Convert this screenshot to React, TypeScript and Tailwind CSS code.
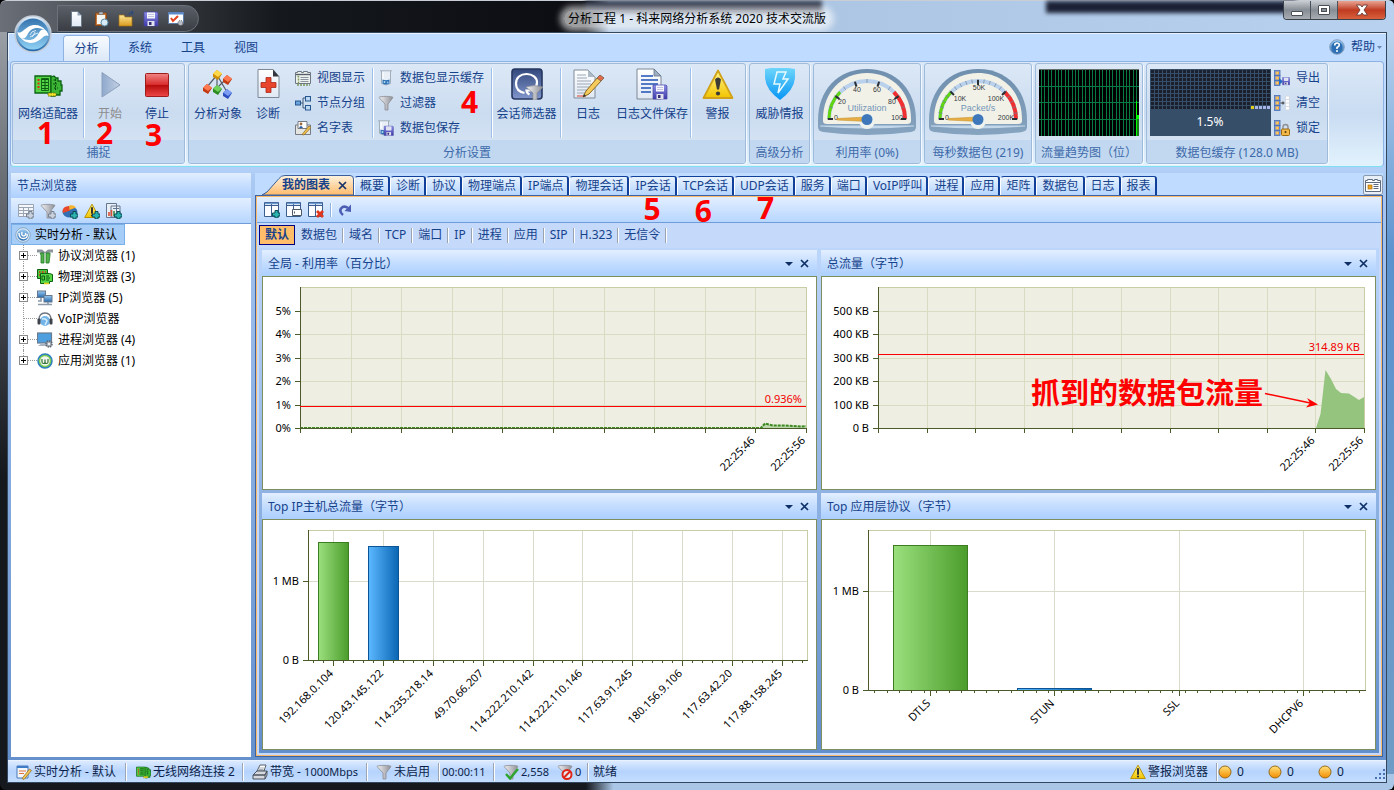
import type { ReactNode } from "react";

/* ---------- shared gradients ---------- */

function Stops({ id, from, to, vertical = true }: { id: string; from: string; to: string; vertical?: boolean }) {
  return (
    <linearGradient id={id} x1="0" y1="0" x2={vertical ? "0" : "1"} y2={vertical ? "1" : "0"}>
      <stop offset="0" stopColor={from} />
      <stop offset="1" stopColor={to} />
    </linearGradient>
  );
}

function SharedDefs() {
  return (
    <svg className="absolute h-0 w-0" aria-hidden="true">
      <defs>
        <Stops id="greenBar" from="#9be07e" to="#4b9c2b" vertical={false} />
        <Stops id="blueBar" from="#5cb8ff" to="#0a66b4" vertical={false} />
        <Stops id="orb" from="#e8f2fb" to="#1f66a8" />
        <Stops id="orbIn" from="#3574ae" to="#8fd0f5" />
        <Stops id="grey" from="#f2f2f4" to="#8d8f96" vertical={false} />
        <Stops id="play" from="#8fa9cd" to="#c3d0e2" vertical={false} />
        <Stops id="warn" from="#fff68a" to="#f2c400" />
        <Stops id="shield" from="#6fd6fb" to="#0795f5" />
        <Stops id="navy" from="#33487c" to="#8096cc" />
        <Stops id="folder" from="#fde79a" to="#d99a1c" />
        <Stops id="floppy" from="#8b8fe6" to="#3e3aa8" />
        <Stops id="page" from="#ffffff" to="#dfe8f4" />
        <Stops id="ball" from="#ffe27a" to="#f28c00" />
        <Stops id="bluish" from="#9ccbf2" to="#2468ac" />
        <Stops id="rim" from="#6f8fae" to="#86a3bf" />
        <linearGradient id="stop" x1="0" y1="0" x2="0" y2="1">
          <stop offset="0" stopColor="#f08585" />
          <stop offset="0.5" stopColor="#d92a2a" />
          <stop offset="0.52" stopColor="#b80d0d" />
          <stop offset="1" stopColor="#ee4747" />
        </linearGradient>
      </defs>
    </svg>
  );
}

/* ---------- icon helpers ---------- */

function Icon({ size = 16, children, className = "" }: { size?: number; children: ReactNode; className?: string }) {
  return (
    <svg width={size} height={size} viewBox={`0 0 ${size} ${size}`} className={`shrink-0 ${className}`} aria-hidden="true">
      {children}
    </svg>
  );
}

const FunnelShape = () => (
  <path d="M1 2.5C1 1 15 1 15 2.5L10 9v6H7V9z" fill="url(#grey)" stroke="#8a8c92" strokeWidth="0.8" />
);
const FloppyShape = () => (
  <g>
    <path d="M1 1h13l1 1v13H1z" fill="url(#floppy)" stroke="#4945a5" strokeWidth="0.7" />
    <rect x="4" y="1.5" width="8" height="6" fill="#f5f6fc" />
    <path d="M5 3.5h6M5 5.5h6" stroke="#b6b9d8" strokeWidth="0.8" />
    <rect x="4.5" y="10" width="7" height="5" fill="#e2e2ee" />
    <rect x="6" y="11" width="2.5" height="3" fill="#333074" />
  </g>
);
const PlusShape = () => (
  <path d="M11 8.5h3V11h2v3h-2v2h-3v-2H8.500v-3H11z" fill="#2bb3b0" stroke="#0b4f58" strokeWidth="1" />
);
const GreyPlusShape = () => (
  <path d="M11 8.500h3V11h2v3h-2v2h-3v-2H8.500v-3H11z" fill="#c8d1dd" stroke="#77818f" strokeWidth="1" />
);
const BeakerShape = () => (
  <g>
    <path d="M2 .8h12M3.500 1v12.500q4.500 3 9 0V1" fill="#e8eff7" stroke="#a3aebd" />
    <path d="M5 2v10" stroke="#fff" />
    <path d="M4.500 9.500q3.500 1.500 7 0v4q-3.500 2-7 0z" fill="#2b6fb3" />
    <circle cx="6.500" cy="12" r="1" fill="#b8dcf8" />
    <circle cx="9.700" cy="12.500" r="1" fill="#8fc4ee" />
  </g>
);
const WarnShape = () => (
  <g>
    <path d="M8 1.200L15.300 14.500H.7z" fill="url(#warn)" stroke="#b89200" strokeLinejoin="round" />
    <path d="M8 5v5" stroke="#333" strokeWidth="2" strokeLinecap="round" />
    <circle cx="8" cy="12.500" r="1.100" fill="#333" />
  </g>
);
const NicShape = () => (
  <g>
    <path d="M1 2h16v17H1z" fill="#55d646" stroke="#0b6212" strokeWidth="1.300" />
    <path d="M17 3l3-1 2 2h2v3h3v4h1v6h-2v4h-4l-1 1h-4z" fill="#3cb435" stroke="#0b6212" strokeWidth="1.300" />
    <path d="M8 5.500h6M8 8.500h6M8 11.500h6M8 14.500h6M11 5v11" fill="none" stroke="#0c5c12" strokeWidth="1.100" />
    <path d="M7.500 4.500h7v12h-7z" fill="none" stroke="#0c5c12" strokeWidth="0.900" />
    <path d="M4.500 5v11" stroke="#e22c18" strokeWidth="2" strokeDasharray="2 1.500" />
    <path d="M19.500 6h3M19 10h4M20 14h4M21.500 5v12" fill="none" stroke="#0a4f10" strokeWidth="1.100" strokeDasharray="2 1" />
    <path d="M14 19h8v3h-8z" fill="#f2e22b" stroke="#6e7a10" strokeDasharray="1.500 1" />
  </g>
);
const PageShape = () => (
  <path d="M3 1h17l7 7v23H3z" fill="url(#page)" stroke="#7c8896" strokeLinejoin="round" />
);
const PageFold = () => <path d="M20 1v7h7z" fill="#9fb0c4" stroke="#647588" strokeWidth="0.800" />;

/* large ribbon icons */

const NicIcon = () => (
  <Icon size={32}>
    <g transform="translate(2 6)">
      <NicShape />
    </g>
  </Icon>
);
const PlayIcon = () => (
  <Icon size={32}>
    <path d="M8 4.500L26 17 8 29z" fill="url(#play)" stroke="#8da0bd" />
  </Icon>
);
const StopIcon = () => (
  <Icon size={32}>
    <rect x="4.500" y="5.500" width="23" height="23" rx="1" fill="url(#stop)" stroke="#9d1c1c" />
  </Icon>
);
function Cube({ x, y, light, dark }: { x: number; y: number; light: string; dark: string }) {
  return (
    <g transform={`translate(${x} ${y})`}>
      <path d="M0 4L4 0l5 4-4 6-5-3z" fill={dark} />
      <path d="M0 3.500L4 0l5 3.500L5 7z" fill={light} />
    </g>
  );
}
const ObjectsIcon = () => (
  <Icon size={32}>
    <path d="M15 7L5 19M15 7l10 17M25 10L15 20M15 7v12" fill="none" stroke="#555c66" strokeWidth="1.200" />
    <Cube x={11} y={2} light="#ffd84a" dark="#cc8e00" />
    <Cube x={21} y={7} light="#ff7a50" dark="#c23b14" />
    <Cube x={1} y={16} light="#ff7a50" dark="#c23b14" />
    <Cube x={11} y={17} light="#6fd05a" dark="#2b8a22" />
    <Cube x={21} y={21} light="#7c9cf2" dark="#2c4dc0" />
  </Icon>
);
const DiagnoseIcon = () => (
  <Icon size={32}>
    <path d="M6 1.500h15l6 7v21H6z" fill="url(#page)" stroke="#7c8896" />
    <path d="M21 1.500v7h6z" fill="#33363c" />
    <path d="M14 9.500h5v5h5v5h-5v5h-5v-5H9v-5h5z" fill="#e8452c" stroke="#a92a18" strokeWidth="0.800" />
  </Icon>
);
const ConversationFilterIcon = () => (
  <Icon size={32}>
    <rect x="1" y="1" width="30" height="30" rx="3" fill="url(#navy)" stroke="#263760" strokeWidth="1.600" />
    <path d="M13.500 25C8 24 5 20.500 5 15.500 5 9.500 9.500 6 15.500 6S26 9.500 26 14.500c0 5-5 8.500-10.500 8 0 2 1 3 3 4" fill="none" stroke="#fff" strokeWidth="2.200" />
    <path d="M15 19q8-3 17 0l-6 6v7h-4v-7z" fill="url(#grey)" stroke="#8a8c92" strokeWidth="0.700" />
  </Icon>
);
const LogIcon = () => (
  <Icon size={32}>
    <path d="M2 2h14l7 7v21H2z" fill="url(#page)" stroke="#808b98" />
    <path d="M16 2v7h7z" fill="#aeb9c6" />
    <path d="M5 7h9M5 10h10M5 13h14M5 16h14M5 19h12M5 22h10M5 25h8" stroke="#9ba6b3" />
    <path d="M5 28h9" stroke="#e0402c" />
    <path d="M11 29l3-6L26 9l4 3-13 14z" fill="#f5cc5c" stroke="#8a6520" />
    <path d="M25 10l3-3 4 3-3 3z" fill="#e46a4a" stroke="#8a6a52" />
    <path d="M11 29l1-3 2 2z" fill="#333" />
  </Icon>
);
const LogSaveIcon = () => (
  <Icon size={32}>
    <g transform="translate(-2 0)">
      <PageShape />
      <PageFold />
    </g>
    <path d="M5 8h12M5 12h17M5 16h17M5 20h10M5 24h10" stroke="#1f52b4" strokeWidth="1.500" />
    <g transform="translate(16 16)">
      <FloppyShape />
    </g>
  </Icon>
);
const AlarmIcon = () => (
  <Icon size={32}>
    <path d="M16 2.500L30.500 30H1.500z" fill="url(#warn)" stroke="#d0a21a" strokeWidth="1.800" strokeLinejoin="round" />
    <path d="M13 11.500q3-4 6 0L17 21.500h-2z" fill="#3d3b35" />
    <circle cx="16" cy="25.500" r="2.100" fill="#3d3b35" />
  </Icon>
);
const ShieldIcon = () => (
  <Icon size={32}>
    <path d="M1 1q15-3 30 0v9q-1 12-15 22Q2 22 1 10z" fill="url(#shield)" />
    <path d="M13 4h9l-3 7h5L14 25l2-9h-6z" fill="none" stroke="#e8faff" strokeWidth="1.500" />
  </Icon>
);

/* small ribbon icons */

const ViewIcon = () => (
  <Icon>
    <path d="M.5 2.500h2v-1h4v1h2v-1h4v1h3v11H.500z" fill="#eef2ee" stroke="#6d7682" />
    <path d="M1 4.500h14" stroke="#56606d" strokeWidth="1.400" />
    <path d="M5.500 7.500h8M5.500 9.500h8M5.500 11.500h8" stroke="#8b95a2" />
    <path d="M2.500 6.500h1v7M2 15h13" fill="none" stroke="#7e9a58" strokeWidth="1.400" strokeDasharray="2 1" />
  </Icon>
);
const GroupIcon = () => (
  <Icon>
    <path d="M5 8h3V3h3M8 8v5h3" fill="none" stroke="#3c587c" />
    <rect x="0.500" y="6" width="5" height="4" fill="#68a3dd" stroke="#27578f" />
    <rect x="10.500" y="1.500" width="5" height="4.500" fill="#bcd7f1" stroke="#27578f" />
    <rect x="10.500" y="10.500" width="5" height="4.500" fill="#bcd7f1" stroke="#27578f" />
  </Icon>
);
const NameIcon = () => (
  <Icon>
    <path d="M.5 5h15v9.500H.5z" fill="#e4e4e0" stroke="#777a80" />
    <path d="M3 1.500h9v7H3z" fill="#fff" stroke="#777a80" />
    <circle cx="6" cy="4" r="1.400" fill="#9b6b3c" />
    <path d="M4 8q2-4 4 0" fill="#2e5da8" />
    <path d="M7 14.500L14 6l2 1.500-7 7.500z" fill="#f0c250" stroke="#8a6520" strokeWidth="0.700" />
  </Icon>
);
const BeakerIcon = () => (
  <Icon>
    <BeakerShape />
  </Icon>
);
const FunnelIcon = () => (
  <Icon>
    <FunnelShape />
  </Icon>
);
const BeakerSaveIcon = () => (
  <Icon>
    <g transform="translate(-2 0)">
      <BeakerShape />
    </g>
    <g transform="translate(5.500 5.500) scale(0.660)">
      <FloppyShape />
    </g>
  </Icon>
);
function CabinetIcon({ kind }: { kind: "save" | "clear" | "lock" }) {
  return (
    <Icon>
      {[0.5, 5.500, 10.500].map((y) => (
        <g key={y}>
          <rect x="0.500" y={y} width="5.500" height="5" fill="#6f9aec" stroke="#4a6fb4" strokeWidth="0.800" />
          <rect x="1.500" y={y + 1} width="3.500" height="3" fill="#f3ab34" />
          <rect x="2.500" y={y + 2} width="1.500" height="1" fill="#fff0c0" />
        </g>
      ))}
      {kind === "save" && (
        <g>
          <path d="M5 8l4 3.500L5 15z" fill="#2469c4" />
          <g transform="translate(8 7) scale(0.520)">
            <FloppyShape />
          </g>
        </g>
      )}
      {kind === "clear" && (
        <g>
          <path d="M6.500 8h4M9 6.500v3" stroke="#333" />
          <path d="M11.500 1h4v14h-4zM11.500 4.500h4M11.500 8h4M11.500 11.500h4" fill="#fff" stroke="#d3dae4" />
        </g>
      )}
      {kind === "lock" && (
        <g>
          <path d="M9 9V7a2.500 2.500 0 015 0V9" fill="none" stroke="#8f8f92" strokeWidth="1.400" />
          <rect x="7.500" y="9" width="8" height="6.500" rx="1" fill="#f2b84a" stroke="#9a6a10" />
          <circle cx="11.500" cy="12" r="1" fill="#4f3a0c" />
        </g>
      )}
    </Icon>
  );
}

/* node browser icons */

const SwirlIcon = () => (
  <Icon>
    <circle cx="8" cy="8" r="7.300" fill="#dbe9f6" stroke="#88a8c8" />
    <circle cx="8" cy="8" r="5.800" fill="url(#bluish)" />
    <path d="M4 6q0 6 5 5.500Q13 11 12 7M7 5q-1 4 2 4 2-.5 1.500-3" fill="none" stroke="#fff" strokeWidth="1.400" />
  </Icon>
);
const ProtocolIcon = () => (
  <Icon>
    <path d="M0 1.500h5l3 2.500 3-2.500h5v3h-4V5H4v-.5H0z" fill="#8d959c" />
    <path d="M3 5h4v10H4V7zM9 5h4v2l-1 8H9z" fill="#53b24b" stroke="#1f7a24" strokeWidth="0.800" />
  </Icon>
);
const PhysicalIcon = () => (
  <Icon>
    <path d="M.5.500h10v9H.5z" fill="#4cc83f" stroke="#0b6212" />
    <path d="M2 3h7M2 6h7" stroke="#e22c18" strokeWidth="1.400" strokeDasharray="1.500 1.500" />
    <path d="M3.500 4.500h9l3 1v7h-3v2h-9z" fill="#55d646" stroke="#0b6212" />
    <path d="M5 7h2.500v4H5zM9 7h3M9 9h4M9 11h3" fill="none" stroke="#0c5c12" />
    <path d="M7 14.500h5" stroke="#e6c81e" strokeWidth="1.600" />
  </Icon>
);
const IpIcon = () => (
  <Icon>
    <rect x="0.500" y="1" width="8" height="6.500" fill="url(#bluish)" stroke="#65788f" />
    <rect x="7" y="5.500" width="8" height="6.500" fill="url(#bluish)" stroke="#65788f" />
    <path d="M4 8v3h-3M11 12v3M1 14.500h14" stroke="#8b99a8" strokeWidth="1.600" fill="none" />
  </Icon>
);
const VoipIcon = () => (
  <Icon>
    <circle cx="8" cy="10" r="5" fill="#74b4e8" />
    <path d="M5 8q4-1 5 2l-2 4" stroke="#d3edfb" fill="none" strokeWidth="1.500" />
    <path d="M2 9q0-7 6-7t6 7" fill="none" stroke="#6d7580" strokeWidth="1.300" />
    <rect x="0.500" y="7.500" width="3" height="6" rx="1" fill="#3f444c" />
    <rect x="12.500" y="7.500" width="3" height="6" rx="1" fill="#3f444c" />
  </Icon>
);
const ProcessIcon = () => (
  <Icon>
    <rect x="0.500" y="1" width="14" height="10" fill="#4d9fdf" stroke="#6b7c90" strokeWidth="1.200" />
    <path d="M1 14h9l-1-3H5z" fill="#a8b4c2" />
    <circle cx="12" cy="12" r="3" fill="#a2aab4" stroke="#5b6470" strokeWidth="1.500" strokeDasharray="1.500 0.800" />
    <circle cx="12" cy="12" r="1.100" fill="#fff" />
  </Icon>
);
const AppIcon = () => (
  <Icon>
    <circle cx="8" cy="8" r="7" fill="#7ccc50" stroke="#2c7fc0" strokeWidth="1.500" />
    <circle cx="8" cy="8" r="4.800" fill="#f2f8f0" />
    <path d="M5 6v3q0 1.500 1.500 1.500T8 9V6.500V9q0 1.500 1.500 1.500T11 9V6" fill="none" stroke="#37713a" strokeWidth="1.200" />
  </Icon>
);

/* toolbar icons */

const TableAddIcon = () => (
  <Icon>
    <path d="M.5 1.500h15v12H.5zM.5 4.500h15M.5 7.500h15M.5 10.500h15M5.500 4.500v9M10.500 4.500v9" fill="#f4f6fa" stroke="#9aa5b4" />
    <GreyPlusShape />
  </Icon>
);
const FunnelAddIcon = () => (
  <Icon>
    <FunnelShape />
    <GreyPlusShape />
  </Icon>
);
const ChartAddIcon = () => (
  <Icon>
    <ellipse cx="8" cy="9" rx="7.500" ry="5.500" fill="#2f6fb2" />
    <path d="M8 7.500L1 10Q-1 4 7 3z" fill="#e8472a" />
    <path d="M7.500 7L7 2.500q5-1 7 2z" fill="#f7b32e" />
    <PlusShape />
  </Icon>
);
const AlarmAddIcon = () => (
  <Icon>
    <WarnShape />
    <PlusShape />
  </Icon>
);
const ReportAddIcon = () => (
  <Icon>
    <path d="M.5.500h10v14H.5zM5 3h9v11H5z" fill="#e9eff6" stroke="#64778f" />
    <path d="M3 13V9M5.500 13V7" stroke="#d94d33" strokeWidth="1.600" />
    <path d="M8 13V8" stroke="#3b8b44" strokeWidth="1.600" />
    <path d="M7 5.500h6" stroke="#64778f" />
    <PlusShape />
  </Icon>
);
function PanelIcon({ kind }: { kind: "add" | "edit" | "remove" }) {
  return (
    <Icon>
      <path d="M.5.500h14v14H.5zM.5 3.500h14M7.500.500v14" fill="#fafcff" stroke="#395d8c" />
      <path d="M1 1.500h13" stroke="#6c9bd2" strokeWidth="1.500" />
      {kind === "add" && <PlusShape />}
      {kind === "edit" && <path d="M6.500 7.500h9v6h-9zM8.500 9.500v2" fill="#fff" stroke="#4f5866" />}
      {kind === "remove" && <path d="M9 9l6 6M15 9l-6 6" stroke="#e2361c" strokeWidth="2.800" />}
    </Icon>
  );
}
const RedoIcon = () => (
  <Icon>
    <path d="M5 13Q1 10 3 6.500 6 3 10 6" fill="none" stroke="#4c5db4" strokeWidth="2.600" />
    <path d="M13 2.500V10L6.500 9z" fill="#4c5db4" />
  </Icon>
);

/* ---------- gauges ---------- */

function polar(r: number, t: number): [number, number] {
  const a = Math.PI * (1 - t);
  return [49 + r * Math.cos(a), 50 - r * Math.sin(a)];
}
function arc(r: number, from: number, to: number) {
  const [x1, y1] = polar(r, from);
  const [x2, y2] = polar(r, to);
  return `M${x1} ${y1}A${r} ${r} 0 0 1 ${x2} ${y2}`;
}

interface GaugeProps {
  title: string;
  labels: { text: string; x: number; y: number }[];
  major: number;
  minor: number;
}

function Gauge({ title, labels, major, minor }: GaugeProps) {
  const ticks = Array.from({ length: minor + 1 }, (_, i) => i / minor);
  const bigTicks = Array.from({ length: major + 1 }, (_, i) => i / major);
  return (
    <svg width="98" height="66" viewBox="0 0 98 66" role="img" aria-label={title} className="font-['Liberation_Sans',sans-serif]">
      <path d="M0 51C0 21 20 0 49 0s49 21 49 51v7q0 4-5 5-44 6-88 0-5-1-5-5z" fill="url(#rim)" />
      <path d="M5 50C5 24 23 4 49 4s44 20 44 46v2q0 3-4 3H9q-4 0-4-3z" fill="#f1f1e7" />
      <path d="M2 56.500h94v1q-47 4-94 0z" fill="#c3d7ea" />
      <circle cx="49" cy="52" r="8" fill="#eef2ee" />
      <path d={arc(38, 0, 1)} fill="none" stroke="#b9d1ec" strokeWidth="4" />
      <path d={arc(38, 0, 0.25)} fill="none" stroke="#5fd40f" strokeWidth="3" />
      <path d={arc(38, 0.75, 1)} fill="none" stroke="#f03030" strokeWidth="4" />
      {ticks.map((t) => {
        const [x1, y1] = polar(36, t);
        const [x2, y2] = polar(40, t);
        return <path key={t} d={`M${x1} ${y1}L${x2} ${y2}`} stroke="#6f8296" strokeWidth="0.700" />;
      })}
      {bigTicks.map((t) => {
        const [x1, y1] = polar(34, t);
        const [x2, y2] = polar(39, t);
        return <path key={t} d={`M${x1} ${y1}L${x2} ${y2}`} stroke="#2a2f36" strokeWidth="2" />;
      })}
      {labels.map((l) => (
        <text key={l.text} x={l.x} y={l.y} fontSize="7" textAnchor="middle" fill="#33373c">
          {l.text}
        </text>
      ))}
      <text x="49" y="42" fontSize="9" textAnchor="middle" fill="#7396b8">
        {title}
      </text>
      <path d="M19 49.500L49 48v4.500L19 51z" fill="#e6ae45" stroke="#c58b22" strokeWidth="0.500" />
      <circle cx="49" cy="50.500" r="5.500" fill="#3f78ba" />
    </svg>
  );
}

function TrafficTrend() {
  const cols = Array.from({ length: 29 }, (_, i) => Math.round(2 + i * 3.400));
  return (
    <svg width="100" height="67" viewBox="0 0 100 67" role="img" aria-label="流量趋势图" shapeRendering="crispEdges">
      <rect width="100" height="67" fill="#000" />
      {cols.map((x) => (
        <rect key={x} x={x} width="1" height="67" fill="#0a7a45" />
      ))}
      {[17, 33, 50].map((y) => (
        <rect key={y} y={y} width="100" height="1" fill="#0a7a45" />
      ))}
      <rect width="100" height="1" fill="#63706a" />
      <path d="M98 67V46h2v21z" fill="#187a18" />
      <rect x="97" y="32" width="1" height="35" fill="#00ff00" />
      <rect x="98" y="46" width="2" height="4" fill="#00ff00" />
    </svg>
  );
}

function BufferMeter() {
  const cols = Array.from({ length: 30 }, (_, i) => i);
  const rows = Array.from({ length: 10 }, (_, i) => i);
  return (
    <svg width="121" height="67" viewBox="0 0 121 67" role="img" aria-label="数据包缓存">
      <rect width="121" height="67" fill="#374e69" />
      {rows.map((r) =>
        cols.map((c) => {
          const last = r === 9;
          const fill = last && c > 25 ? "#a9b4e8" : last && c === 25 ? "#e2cf1c" : "#1a202e";
          return <rect key={`${r}-${c}`} x={1 + c * 4} y={1 + r * 4} width="3" height="3" fill={fill} shapeRendering="crispEdges" />;
        }),
      )}
      <text x="60" y="57" fontSize="12" textAnchor="middle" fill="#fff">
        1.5%
      </text>
    </svg>
  );
}

/* ---------- annotations ---------- */

function Mark({ children, className }: { children: ReactNode; className: string }) {
  return (
    <span className={`pointer-events-none absolute z-20 text-[30px] leading-[22px] font-bold text-[#ff0000] ${className}`}>{children}</span>
  );
}

/* ---------- ribbon ---------- */

function BigButton({ icon, label, width = "px-1.5", muted = false, children }: { icon: ReactNode; label: string; width?: string; muted?: boolean; children?: ReactNode }) {
  return (
    <button type="button" className={`relative flex h-[74px] shrink-0 flex-col items-center gap-1.5 pt-[3px] ${width} ${muted ? "text-[#8d8d8d]" : ""}`}>
      {icon}
      <span className="whitespace-nowrap">{label}</span>
      {children}
    </button>
  );
}

function SmallButton({ icon, label, children }: { icon: ReactNode; label: string; children?: ReactNode }) {
  return (
    <button type="button" className="relative flex h-[25px] items-center gap-1.5 whitespace-nowrap">
      {icon}
      {label}
      {children}
    </button>
  );
}

const Divider = () => <span className="mt-[3px] h-[70px] w-0.5 shrink-0 border-r border-white bg-[#9dc0ea]" />;

function RibbonGroup({ title, width, children }: { title: string; width: string; children: ReactNode }) {
  return (
    <section
      className={`flex h-[101px] shrink-0 flex-col rounded-[3px] border border-[#9ebbdb] bg-linear-to-b from-[#dce8f6] via-[#cbdcf0] to-[#d9e8f6] shadow-[1px_1px_0_#f3f9ff] ${width}`}
    >
      <div className="flex h-[76px] items-start pt-px">{children}</div>
      <h2 className="flex flex-1 items-center justify-center rounded-b-[3px] bg-[#c1d8f0] pt-0.5 text-[#3e6aaa]">{title}</h2>
    </section>
  );
}

function Ribbon() {
  return (
    <div className="mx-0.5 flex h-[106px] gap-[3px] rounded-[4px] border border-[#8db2e3] border-b-[#7ee0f0] bg-linear-to-b from-[#dbe8f7] via-[#c9dcf2] to-[#e2f2fd] px-px pt-px">
      <RibbonGroup title="捕捉" width="w-[173px]">
        <BigButton icon={<NicIcon />} label="网络适配器" width="w-[70px]">
          <Mark className="top-[57px] left-[24px]">1</Mark>
        </BigButton>
        <Divider />
        <BigButton icon={<PlayIcon />} label="开始" width="w-[50px]" muted>
          <Mark className="top-[57px] left-[11px]">2</Mark>
        </BigButton>
        <BigButton icon={<StopIcon />} label="停止" width="w-[44px]">
          <Mark className="top-[59px] left-[10px]">3</Mark>
        </BigButton>
      </RibbonGroup>

      <RibbonGroup title="分析设置" width="w-[558px]">
        <BigButton icon={<ObjectsIcon />} label="分析对象" width="w-[58px]" />
        <BigButton icon={<DiagnoseIcon />} label="诊断" width="w-[42px]" />
        <div className="ml-1.5 flex w-[77px] flex-col">
          <SmallButton icon={<ViewIcon />} label="视图显示" />
          <SmallButton icon={<GroupIcon />} label="节点分组" />
          <SmallButton icon={<NameIcon />} label="名字表" />
        </div>
        <Divider />
        <div className="ml-1 flex w-[113px] flex-col">
          <SmallButton icon={<BeakerIcon />} label="数据包显示缓存" />
          <SmallButton icon={<FunnelIcon />} label="过滤器">
            <Mark className="top-px left-[83px]">4</Mark>
          </SmallButton>
          <SmallButton icon={<BeakerSaveIcon />} label="数据包保存" />
        </div>
        <Divider />
        <BigButton icon={<ConversationFilterIcon />} label="会话筛选器" width="w-[67px]" />
        <Divider />
        <BigButton icon={<LogIcon />} label="日志" width="w-[52px]" />
        <BigButton icon={<LogSaveIcon />} label="日志文件保存" width="w-[76px]" />
        <Divider />
        <BigButton icon={<AlarmIcon />} label="警报" width="w-[51px]" />
      </RibbonGroup>

      <RibbonGroup title="高级分析" width="w-[61px]">
        <BigButton icon={<ShieldIcon />} label="威胁情报" width="w-full" />
      </RibbonGroup>

      <RibbonGroup title="利用率 (0%)" width="w-[108px]">
        <div className="flex flex-1 justify-center pt-1">
          <Gauge
            title="Utilization"
            major={5}
            minor={10}
            labels={[
              { text: "0", x: 18, y: 51 },
              { text: "20", x: 24, y: 35 },
              { text: "40", x: 39, y: 23 },
              { text: "60", x: 59, y: 23 },
              { text: "80", x: 74, y: 35 },
              { text: "100", x: 79, y: 51 },
            ]}
          />
        </div>
      </RibbonGroup>

      <RibbonGroup title="每秒数据包 (219)" width="w-[108px]">
        <div className="flex flex-1 justify-center pt-1">
          <Gauge
            title="Packet/s"
            major={4}
            minor={20}
            labels={[
              { text: "0", x: 18, y: 51 },
              { text: "10K", x: 31, y: 32 },
              { text: "50K", x: 50, y: 21 },
              { text: "100K", x: 67, y: 32 },
              { text: "200K", x: 77, y: 51 },
            ]}
          />
        </div>
      </RibbonGroup>

      <RibbonGroup title="流量趋势图（位）" width="w-[108px]">
        <div className="flex flex-1 justify-center pt-1">
          <TrafficTrend />
        </div>
      </RibbonGroup>

      <RibbonGroup title="数据包缓存 (128.0 MB)" width="w-[182px]">
        <div className="pt-1 pl-[3px]">
          <BufferMeter />
        </div>
        <div className="ml-[3px] flex flex-col">
          <SmallButton icon={<CabinetIcon kind="save" />} label="导出" />
          <SmallButton icon={<CabinetIcon kind="clear" />} label="清空" />
          <SmallButton icon={<CabinetIcon kind="lock" />} label="锁定" />
        </div>
      </RibbonGroup>
    </div>
  );
}

/* ---------- title bar ---------- */

const OrbLid = () => (
  <path d="M3.500 17C7 19 9 15 14 12c6-3.500 14-2 17.500 3.500C27 12.500 21 12 17 15c-4 3-4 8.500-8 8.500C6 23.500 4 21 3.500 17z" fill="#fff" />
);

function TitleBar() {
  return (
    <header className="relative flex h-8 shrink-0 items-start overflow-visible rounded-t-md border-t border-[#c9ced6] bg-linear-to-r from-[#6b7078] from-0% via-[#15181c] via-20% to-[#0b0d12] to-[42%]">
      <div className="absolute inset-y-0 right-0 left-[42%] bg-linear-to-r from-[#0b0d12] via-[#a9c2df] via-3% to-[#b7d1ee]" />
      <div className="absolute top-0 right-[41%] left-[42%] h-3 bg-[#1c2336] blur-[2px]" />
      <div className="absolute top-0 right-[7%] left-3/4 h-3 bg-[#1c2136] blur-[2px]" />
      <div className="absolute top-1 left-[57px] flex h-[27px] w-[142px] items-center justify-between rounded-r-full border border-[#6c727b] bg-linear-to-b from-[#5b6068] to-[#3a3d43] pr-3.5 pl-2.5">
        <button type="button" aria-label="新建">
          <Icon>
            <path d="M3.500.500h6l4 4v11h-10z" fill="url(#page)" stroke="#6d7a8a" />
            <path d="M9.500.500v4h4z" fill="#8fa0b5" />
          </Icon>
        </button>
        <button type="button" aria-label="粘贴">
          <Icon>
            <path d="M2.500 2h11v12.500h-11z" fill="#c57a3e" stroke="#87491c" />
            <path d="M4 4h8v9H4z" fill="#f6f6f2" />
            <path d="M6 1h4v2.500H6z" fill="#b9bdc4" stroke="#666" strokeWidth="0.600" />
            <circle cx="11.500" cy="11.500" r="3.500" fill="#d7eaf6" stroke="#5788a8" />
          </Icon>
        </button>
        <button type="button" aria-label="打开">
          <Icon>
            <path d="M1 4h5l1 2h7v9H1z" fill="url(#folder)" stroke="#a87414" strokeWidth="0.700" />
            <path d="M11 4q0-2 4-3l-2-.5M15 1l-1 3" fill="none" stroke="#294a7c" strokeWidth="1.200" />
          </Icon>
        </button>
        <button type="button" aria-label="保存">
          <Icon>
            <FloppyShape />
          </Icon>
        </button>
        <button type="button" aria-label="选项">
          <Icon>
            <path d="M.5 1.500h15v11H.5z" fill="#fff" stroke="#5c7ba8" />
            <path d="M.5 2.500h15" stroke="#5c8cd0" strokeWidth="2" />
            <path d="M3 7l2 3 5-5" fill="none" stroke="#e2401f" strokeWidth="2" />
            <circle cx="12.500" cy="12" r="2.500" fill="#b8bdc6" stroke="#555" strokeDasharray="1 1" />
          </Icon>
        </button>
      </div>
      <button type="button" aria-label="主菜单" className="absolute top-3.5 left-3.5 z-10">
        <Icon size={38}>
          <circle cx="19" cy="19" r="18" fill="url(#orb)" stroke="#c4cdd8" strokeWidth="1.500" />
          <circle cx="19" cy="19" r="15.500" fill="url(#orbIn)" />
          <OrbLid />
          <g transform="rotate(180 19 19)">
            <OrbLid />
          </g>
          <path d="M16 20q1-4 6-4.500M18 22q1-3 6-4M21 17q-1 4-5 5" fill="none" stroke="#e6f2fb" strokeWidth="0.900" />
        </Icon>
      </button>
      <h1 className="absolute inset-x-0 top-2.5 text-center text-xs whitespace-nowrap text-black">
        <span className="rounded-full bg-white/60 px-1 shadow-[0_0_6px_4px_rgba(255,255,255,0.6)]">分析工程 1 - 科来网络分析系统 2020 技术交流版</span>
      </h1>
      <div className="absolute top-0 right-2 flex h-[19px] overflow-hidden rounded-b border border-t-0 border-[#3a4048] text-white">
        <button type="button" aria-label="最小化" className="flex w-[27px] items-center justify-center border-r border-[#4a525c] bg-linear-to-b from-[#c9cdd2] via-[#878d94] to-[#a8adb2]">
          <span className="mt-1.5 h-[5px] w-3 rounded-[1px] border border-[#4a4f56] bg-white" />
        </button>
        <button type="button" aria-label="最大化" className="flex w-[27px] items-center justify-center border-r border-[#4a525c] bg-linear-to-b from-[#c9cdd2] via-[#878d94] to-[#a8adb2]">
          <span className="flex h-[10px] w-3 items-center justify-center rounded-[1px] border border-[#4a4f56] bg-white">
            <span className="h-1 w-1.5 border border-[#4a4f56] bg-[#8a9098]" />
          </span>
        </button>
        <button type="button" aria-label="关闭" className="flex w-[47px] items-center justify-center bg-linear-to-b from-[#e8a392] via-[#bf3a20] to-[#d9603c]">
          <svg width="14" height="12" viewBox="0 0 14 12" aria-hidden="true">
            <path d="M1.500 1h4L7 3l1.500-2h4L9 6l3.500 5h-4L7 9l-1.500 2h-4L5 6z" fill="#fff" stroke="#6a3a34" strokeWidth="0.900" />
          </svg>
        </button>
      </div>
    </header>
  );
}

function MenuBar() {
  return (
    <nav className="flex h-7 items-end border-t border-l border-[#e9f3ff] pr-1 pl-[54px]">
      <div className="flex gap-[7px]">
        <button type="button" className="h-[26px] w-[47px] rounded-t-[4px] border border-b-0 border-[#8db2e3] bg-linear-to-b from-[#f7fbff] to-[#dbe8f7]">
          分析
        </button>
        {["系统", "工具", "视图"].map((m) => (
          <button key={m} type="button" className="h-[26px] w-[46px]">
            {m}
          </button>
        ))}
      </div>
      <button type="button" className="mb-1.5 ml-auto flex items-center gap-1.5">
        <Icon>
          <circle cx="8" cy="8" r="7.300" fill="url(#bluish)" stroke="#8aa3bf" />
          <circle cx="8" cy="8" r="5.500" fill="#2d6fb4" />
          <path d="M5.700 6.500Q5.700 4 8 4t2.300 2Q10.300 7.300 8 8.500V10" fill="none" stroke="#fff" strokeWidth="1.600" />
          <circle cx="8" cy="12" r="1" fill="#fff" />
        </Icon>
        <span>帮助</span>
        <svg width="5" height="3" viewBox="0 0 5 3" className="-ml-1" aria-hidden="true">
          <path d="M0 0h5L2.500 3z" fill="#6b87b0" />
        </svg>
      </button>
    </nav>
  );
}

/* ---------- node browser ---------- */

const nodes: { label: string; icon: ReactNode; open: boolean }[] = [
  { label: "协议浏览器 (1)", icon: <ProtocolIcon />, open: true },
  { label: "物理浏览器 (3)", icon: <PhysicalIcon />, open: true },
  { label: "IP浏览器 (5)", icon: <IpIcon />, open: true },
  { label: "VoIP浏览器", icon: <VoipIcon />, open: false },
  { label: "进程浏览器 (4)", icon: <ProcessIcon />, open: true },
  { label: "应用浏览器 (1)", icon: <AppIcon />, open: true },
];

function NodeBrowser() {
  return (
    <aside className="flex w-60 shrink-0 flex-col bg-white">
      <h2 className="flex h-[25px] items-center bg-linear-to-b from-[#e1eeff] via-[#c6deff] to-[#add0ff] pl-1.5">节点浏览器</h2>
      <div className="flex h-[26px] items-center gap-1.5 border-b border-[#6f9dd9] bg-linear-to-b from-[#e3efff] to-[#b7d6ff] pl-[7px]">
        <button type="button" aria-label="添加表格"><TableAddIcon /></button>
        <button type="button" aria-label="添加过滤器"><FunnelAddIcon /></button>
        <button type="button" aria-label="添加图表"><ChartAddIcon /></button>
        <button type="button" aria-label="添加警报"><AlarmAddIcon /></button>
        <button type="button" aria-label="添加报表"><ReportAddIcon /></button>
      </div>
      <div className="text-black">
        <button type="button" className="flex h-[21px] w-[114px] items-center gap-1 border border-[#7ab0e8] bg-[#a6cdf7] pl-[3px] whitespace-nowrap">
          <SwirlIcon />
          实时分析 - 默认
        </button>
        <ul>
          {nodes.map((n, i) => (
            <li key={n.label} className="flex h-[21px] items-stretch pl-2">
              <span className="relative w-[18px]">
                <span className={`absolute top-0 left-1 border-l border-dotted border-[#9a9a9a] ${i === nodes.length - 1 ? "h-2.5" : "h-full"}`} />
                <span className="absolute top-2.5 right-0 left-1 border-t border-dotted border-[#9a9a9a]" />
                {n.open && (
                  <svg width="9" height="9" viewBox="0 0 9 9" className="absolute top-1.5 left-0" aria-hidden="true" shapeRendering="crispEdges">
                    <path d="M.5.500h8v8h-8z" fill="#fff" stroke="#8a8a8a" />
                    <path d="M2 4.500h5M4.500 2v5" stroke="#000" />
                  </svg>
                )}
              </span>
              <button type="button" className="flex items-center gap-[5px] whitespace-nowrap">
                {n.icon}
                {n.label}
              </button>
            </li>
          ))}
        </ul>
      </div>
    </aside>
  );
}

/* ---------- charts ---------- */

interface TimeChartProps {
  left: number;
  right: number;
  labels: string[];
  limit: { y: number; text: string };
  children: ReactNode;
}

const PLOT_TOP = 10;
const PLOT_BOTTOM = 151;

function TimeChart({ left, right, labels, limit, children }: TimeChartProps) {
  const step = (right - left) / 10;
  const rowY = (i: number) => Math.round(34 + i * 23.400);
  return (
    <svg viewBox="0 0 553 212" className="h-full w-full" role="img">
      <g shapeRendering="crispEdges">
        <rect x={left + 0.5} y={PLOT_TOP + 0.5} width={right - left} height={PLOT_BOTTOM - PLOT_TOP} fill="#eeeee2" stroke="#c9cda6" />
        <g fill="#dadcc2">
          {Array.from({ length: 9 }, (_, i) => (
            <rect key={i} x={Math.round(left + step * (i + 1))} y={PLOT_TOP + 1} width="1" height={PLOT_BOTTOM - PLOT_TOP} />
          ))}
          {labels.slice(0, 5).map((l, i) => (
            <rect key={l} x={left} y={rowY(i)} width={right - left} height="1" />
          ))}
        </g>
      </g>
      {children}
      <g shapeRendering="crispEdges" fill="#4a5a28">
        <rect x={left} y={PLOT_TOP} width="1" height={PLOT_BOTTOM - PLOT_TOP} />
        <rect x={left - 5} y={PLOT_BOTTOM} width={right - left + 6} height="1" />
        {labels.map((l, i) => (
          <rect key={l} x={left - 5} y={rowY(i)} width="5" height="1" />
        ))}
        {Array.from({ length: 11 }, (_, i) => (
          <rect key={i} x={Math.round(left + step * i)} y={PLOT_BOTTOM} width="1" height="5" />
        ))}
        <rect x={left} y={limit.y} width={right - left} height="1" fill="#ff0000" />
      </g>
      <g fontSize="11">
        {labels.map((l, i) => (
          <text key={l} x={left - 9} y={rowY(i) + 4} textAnchor="end">
            {l}
          </text>
        ))}
        <text x={right - 4} y={limit.y - 3} textAnchor="end" fill="#f20000">
          {limit.text}
        </text>
        {["22:25:46", "22:25:56"].map((t, i) => {
          const x = right - step * (1 - i);
          return (
            <text key={t} textAnchor="end" transform={`translate(${x} 164) rotate(-45)`}>
              {t}
            </text>
          );
        })}
      </g>
    </svg>
  );
}

interface BarChartProps {
  height: number;
  left: number;
  right: number;
  bottom: number;
  unitY: number;
  categories: string[];
  bars: { y: number; color: string; edge: string }[];
  barWidth: number;
  minor: number;
}

function BarChart({ height, left, right, bottom, unitY, categories, bars, barWidth, minor }: BarChartProps) {
  const step = (right - left) / categories.length;
  const sub = step / minor;
  const centre = (i: number) => Math.round(left + step * (i + 0.5));
  return (
    <svg viewBox={`0 0 553 ${height}`} className="h-full w-full" role="img">
      <g shapeRendering="crispEdges">
        <rect x={left + 0.5} y="10.500" width={right - left} height={bottom - 10} fill="#fff" stroke="#c9cda6" />
        <g fill="#dadccb">
          {categories.map((c, i) => (
            <rect key={c} x={centre(i)} y="11" width="1" height={bottom - 11} />
          ))}
          <rect x={left} y={unitY} width={right - left} height="1" />
        </g>
        {bars.map((b, i) => (
          <rect
            key={b.color}
            x={Math.round(left + step * (i + 0.5) - barWidth / 2) + 0.5}
            y={b.y + 0.5}
            width={barWidth}
            height={bottom - b.y}
            fill={b.color}
            stroke={b.edge}
          />
        ))}
        <g fill="#4a5a28">
          <rect x={left} y="10" width="1" height={bottom - 10} />
          <rect x={left - 5} y={bottom} width={right - left + 6} height="1" />
          <rect x={left - 5} y={unitY} width="5" height="1" />
          {Array.from({ length: categories.length * minor }, (_, i) => (
            <rect key={i} x={Math.round(left + sub * (i + 0.5))} y={bottom} width="1" height="3" />
          ))}
          {categories.map((c, i) => (
            <rect key={c} x={centre(i)} y={bottom} width="1" height="6" />
          ))}
        </g>
      </g>
      <g fontSize="11">
        <text x={left - 9} y={unitY + 4} textAnchor="end">
          1 MB
        </text>
        <text x={left - 9} y={bottom + 4} textAnchor="end">
          0 B
        </text>
        {categories.map((c, i) => (
          <text key={c} textAnchor="end" transform={`translate(${centre(i) + 1} ${bottom + 14}) rotate(-45)`}>
            {c}
          </text>
        ))}
      </g>
    </svg>
  );
}

function ChartPanel({ title, children }: { title: string; children: ReactNode }) {
  return (
    <section className="flex min-h-0 min-w-0 flex-col">
      <header className="flex h-[26px] shrink-0 items-center bg-linear-to-b from-[#e3efff] via-[#c4ddff] to-[#abcfff] pt-0.5 pr-2 pl-1.5">
        <h3 className="flex-1">{title}</h3>
        <button type="button" aria-label="菜单" className="mr-[7px]">
          <svg width="8" height="4" viewBox="0 0 8 4" aria-hidden="true">
            <path d="M0 0h8L4 4z" fill="#0e2f66" />
          </svg>
        </button>
        <button type="button" aria-label="关闭" className="pb-0.5">
          <svg width="9" height="9" viewBox="0 0 9 9" aria-hidden="true">
            <path d="M1 1l7 7M8 1L1 8" stroke="#0e2f66" strokeWidth="1.700" />
          </svg>
        </button>
      </header>
      <div className="min-h-0 flex-1 border border-[#7d8f5f] bg-white text-black">{children}</div>
    </section>
  );
}

/* ---------- workspace ---------- */

const viewTabs: { label: string; mark?: string; at?: string }[] = [
  { label: "概要" },
  { label: "诊断" },
  { label: "协议" },
  { label: "物理端点" },
  { label: "IP端点" },
  { label: "物理会话" },
  { label: "IP会话", mark: "5", at: "top-[21px] left-[13px]" },
  { label: "TCP会话", mark: "6", at: "top-[23px] left-[17px]" },
  { label: "UDP会话", mark: "7", at: "top-[20px] left-[22px]" },
  { label: "服务" },
  { label: "端口" },
  { label: "VoIP呼叫" },
  { label: "进程" },
  { label: "应用" },
  { label: "矩阵" },
  { label: "数据包" },
  { label: "日志" },
  { label: "报表" },
];

const subTabs = ["数据包", "域名", "TCP", "端口", "IP", "进程", "应用", "SIP", "H.323", "无信令"];

function Workspace() {
  return (
    <main className="flex min-w-0 flex-1 flex-col">
      <div className="flex h-[22px] shrink-0 items-end bg-[#bfdbff] pl-[7px]">
        <div className="relative flex h-[20px] w-[92px] shrink-0 items-center pl-5">
          <svg width="92" height="20" viewBox="0 0 92 20" className="absolute inset-0" aria-hidden="true">
            <defs>
              <linearGradient id="activeTab" x1="0" y1="0" x2="0" y2="1">
                <stop offset="0" stopColor="#fff3e0" />
                <stop offset="1" stopColor="#ffbb6b" />
              </linearGradient>
            </defs>
            <path d="M0 20L5 17 17 3.500Q19 .5 23 .5h65q3.500 0 3.500 3.500v16z" fill="url(#activeTab)" stroke="#3b5f9b" />
          </svg>
          <button type="button" className="relative font-bold">我的图表</button>
          <button type="button" aria-label="关闭标签" className="relative ml-2">
            <svg width="9" height="9" viewBox="0 0 9 9" aria-hidden="true">
              <path d="M1 1l7 7M8 1L1 8" stroke="#15336b" strokeWidth="1.700" />
            </svg>
          </button>
        </div>
        {viewTabs.map((t) => (
          <button
            key={t.label}
            type="button"
            className="relative h-[19px] shrink-0 rounded-tl-[4px] rounded-tr-[3px] border-t border-r-2 border-l border-[#11409a] border-l-white bg-linear-to-b from-[#e9f3ff] to-[#b4d4ff] pr-1 pl-[5px] leading-4 whitespace-nowrap"
          >
            {t.label}
            {t.mark && <Mark className={t.at ?? ""}>{t.mark}</Mark>}
          </button>
        ))}
        <button type="button" aria-label="布局" className="ml-auto flex h-5 w-5 items-center justify-center rounded-[2px] border border-[#8a9aae] bg-[#e9eff7]">
          <svg width="16" height="14" viewBox="0 0 16 14" aria-hidden="true">
            <path d="M.5 2.500h2v-1h5v1h2v-1h3v1h3v11H.5z" fill="#fff" stroke="#5c6b7f" />
            <path d="M1 4.500h14" stroke="#5c6b7f" />
            <rect x="3" y="7" width="4" height="4" fill="#efa51c" stroke="#a86d0a" strokeWidth="0.700" />
            <path d="M8.500 6.500h5M8.500 8.500h5M8.500 10.500h5" stroke="#5c6b7f" />
          </svg>
        </button>
      </div>

      <div className="flex min-h-0 flex-1 flex-col border border-[#3c64a4]">
        <div className="flex min-h-0 flex-1 flex-col border border-[#fbb96a] bg-[#c5d9fa]">
          <div className="flex h-[26px] shrink-0 items-center gap-1.5 border-b border-[#6f9dd9] bg-linear-to-b from-[#e3efff] to-[#b7d6ff] pl-[7px]">
            <button type="button" aria-label="添加面板"><PanelIcon kind="add" /></button>
            <button type="button" aria-label="重命名面板"><PanelIcon kind="edit" /></button>
            <button type="button" aria-label="删除面板"><PanelIcon kind="remove" /></button>
            <span className="h-3.5 w-0.5 border-r border-white bg-[#8fb1df]" />
            <button type="button" aria-label="重置"><RedoIcon /></button>
          </div>
          <div className="flex h-[25px] shrink-0 items-center pb-px pl-0.5">
            <button type="button" className="mr-px h-5 w-9 border border-[#000080] bg-[#ffbd69] font-bold">默认</button>
            {subTabs.map((s) => (
              <button key={s} type="button" className="flex items-center pl-[5px] whitespace-nowrap">
                {s}
                <span className="ml-[5px] h-[15px] w-0.5 border-r border-white bg-[#9aa3b0]" />
              </button>
            ))}
          </div>
          <div className="mx-0.5 mb-0.5 grid min-h-0 flex-1 grid-cols-2 grid-rows-[240fr_257fr] gap-x-1 gap-y-[3px] bg-linear-to-b from-[#bcd6fb] to-[#628ecb] px-[3px] pt-0.5 pb-[3px]">
            <ChartPanel title="全局 - 利用率（百分比）">
              <TimeChart left={37} right={543} labels={["5%", "4%", "3%", "2%", "1%", "0%"]} limit={{ y: 129, text: "0.936%" }}>
                <path d="M37 150.500H498l4-4 8 2h12l8 .5 8 .5 5-.5V152H37z" fill="#9cc98a" opacity="0.600" />
                <path d="M37 151H498L502 146.500 510 148.500H522L530 149 538 149.500 543 149" fill="none" stroke="#3c8a20" strokeWidth="2" strokeDasharray="3 1" />
              </TimeChart>
            </ChartPanel>
            <ChartPanel title="总流量（字节）">
              <TimeChart left={56} right={542} labels={["500 KB", "400 KB", "300 KB", "200 KB", "100 KB", "0 B"]} limit={{ y: 77, text: "314.89 KB" }}>
                <path d="M494 151L498.500 137 503.500 93 509 102 514 112 519 116 527 116.500 537 123 542 120V151z" fill="#95c47f" />
                <text x="209" y="127" fontSize="29" fontWeight="700" fill="#ff0000">
                  抓到的数据包流量
                </text>
                <path d="M443 116.500L493 127" stroke="#ff0000" strokeWidth="1.500" />
                <path d="M496 127.500L485 121l3 5-4 4.500z" fill="#ff0000" />
              </TimeChart>
            </ChartPanel>
            <ChartPanel title="Top IP主机总流量（字节）">
              <BarChart
                height={229}
                left={45}
                right={544}
                bottom={140}
                unitY={61}
                barWidth={30}
                minor={5}
                categories={["192.168.0.104", "120.43.145.122", "114.235.218.14", "49.70.66.207", "114.222.210.142", "114.222.110.146", "117.63.91.245", "180.156.9.106", "117.63.42.20", "117.88.158.245"]}
                bars={[
                  { y: 22, color: "url(#greenBar)", edge: "#3c7d22" },
                  { y: 26, color: "url(#blueBar)", edge: "#0b5596" },
                ]}
              />
            </ChartPanel>
            <ChartPanel title="Top 应用层协议（字节）">
              <BarChart
                height={229}
                left={46}
                right={543}
                bottom={170}
                unitY={71}
                barWidth={74}
                minor={10}
                categories={["DTLS", "STUN", "SSL", "DHCPV6"]}
                bars={[
                  { y: 25, color: "url(#greenBar)", edge: "#3c7d22" },
                  { y: 168, color: "url(#blueBar)", edge: "#0b5596" },
                ]}
              />
            </ChartPanel>
          </div>
        </div>
      </div>
    </main>
  );
}

/* ---------- status bar ---------- */

const StatusDivider = () => <span className="h-[18px] w-0.5 shrink-0 border-r border-white bg-[#9aa5b5]" />;

function StatusCell({ width, children }: { width: string; children: ReactNode }) {
  return <div className={`flex shrink-0 items-center gap-0.5 whitespace-nowrap ${width}`}>{children}</div>;
}

function StatusBar() {
  return (
    <footer className="flex h-[22px] shrink-0 items-center border-t border-[#e9f3ff] bg-linear-to-b from-[#dceaff] via-[#b5d3fd] to-[#c5deff] text-[#0c1f4a]">
      <StatusCell width="w-[117px] pl-2">
        <Icon>
          <path d="M1 2h11v12H1z" fill="#f3f7fc" stroke="#4c79b8" />
          <path d="M1 3h11" stroke="#3f7cc8" strokeWidth="2" />
          <path d="M3 7h7M3 9.500h5" stroke="#e0723a" />
          <path d="M6 14.500L13.500 5l2 1.500-7.500 9z" fill="#f3c556" stroke="#8a6520" strokeWidth="0.700" />
        </Icon>
        实时分析 - 默认
      </StatusCell>
      <StatusDivider />
      <StatusCell width="w-[115px] pl-2">
        <Icon>
          <g transform="translate(1 2) scale(0.540)">
            <NicShape />
          </g>
        </Icon>
        无线网络连接 2
      </StatusCell>
      <StatusDivider />
      <StatusCell width="w-[122px] pl-2">
        <Icon>
          <path d="M5 7l3-6h6l-2 6z" fill="#fff" stroke="#59616c" />
          <path d="M7 4h5M6.500 5.500h5" stroke="#8a929c" strokeWidth="0.700" />
          <path d="M1 11l4-4h10l-2 4zM1 11h12v4H1zM13 11l2-4v4l-2 4" fill="#d5d9df" stroke="#4c545f" />
        </Icon>
        <span>带宽 - <span className="text-[11px]">1000Mbps</span></span>
      </StatusCell>
      <StatusDivider />
      <StatusCell width="w-[70px] pl-2">
        <FunnelIcon />
        未启用
      </StatusCell>
      <StatusDivider />
      <StatusCell width="w-[53px] pl-0.5 text-[11px]">00:00:11</StatusCell>
      <StatusDivider />
      <StatusCell width="w-[92px] pl-2 text-[11px]">
        <Icon>
          <FunnelShape />
          <path d="M3 10l4 4.500L15 5" fill="none" stroke="#2da42b" strokeWidth="2.400" />
        </Icon>
        <span className="w-[34px]">2,558</span>
        <Icon>
          <FunnelShape />
          <circle cx="10" cy="10.500" r="4.500" fill="#ffffffaa" stroke="#e02418" strokeWidth="2" />
          <path d="M7 13.500l6-6" stroke="#e02418" strokeWidth="2" />
        </Icon>
        0
      </StatusCell>
      <StatusDivider />
      <StatusCell width="pl-1">就绪</StatusCell>
      <div className="ml-auto flex items-center">
        <StatusCell width="w-[86px]">
          <Icon>
            <WarnShape />
          </Icon>
          警报浏览器
        </StatusCell>
        <StatusDivider />
        {[1, 2, 3].map((n) => (
          <div key={n} className="flex w-[50px] items-center gap-[5px]">
            <Icon size={14}>
              <circle cx="7" cy="7" r="6" fill="url(#ball)" stroke="#9a6c1c" />
            </Icon>
            0
          </div>
        ))}
        <svg width="12" height="12" viewBox="0 0 12 12" className="mt-1 ml-1.5" aria-hidden="true">
          <path d="M9 1h2v2H9zM5 5h2v2H5zM9 5h2v2H9zM1 9h2v2H1zM5 9h2v2H5zM9 9h2v2H9z" fill="#4a72b0" />
        </svg>
      </div>
    </footer>
  );
}

export default function App() {
  return (
    <div className="bg-black">
      <div className="relative flex h-screen min-h-[600px] w-full flex-col overflow-hidden rounded-md bg-linear-to-r from-[#15181d] from-[42%] to-[#a9c6e6] to-[44%] font-['Noto_Sans','Noto_Sans_CJK_SC',sans-serif] text-xs leading-4 text-[#15428b]">
        <SharedDefs />
        <div className="absolute top-8 bottom-4 left-0 w-[7px] bg-linear-to-b from-[#9a9fa6] via-[#15181d] via-60% to-[#15181d]" />
        <div className="absolute top-8 right-0 bottom-4 w-[7px] bg-linear-to-b from-[#b8d3ee] via-[#5b93cf] via-30% to-[#6f9cc6]" />
        <TitleBar />
        <div className="relative mx-[7px] mb-[7px] flex min-h-0 flex-1 flex-col border border-[#33475f] bg-linear-to-b from-[#bfdbff] from-15% via-[#a9c8f2] via-20% to-[#628ecb]">
          <MenuBar />
          <Ribbon />
          <div className="mt-1.5 mb-[3px] flex min-h-0 flex-1 gap-1 px-[3px]">
            <NodeBrowser />
            <Workspace />
          </div>
          <StatusBar />
        </div>
      </div>
    </div>
  );
}
